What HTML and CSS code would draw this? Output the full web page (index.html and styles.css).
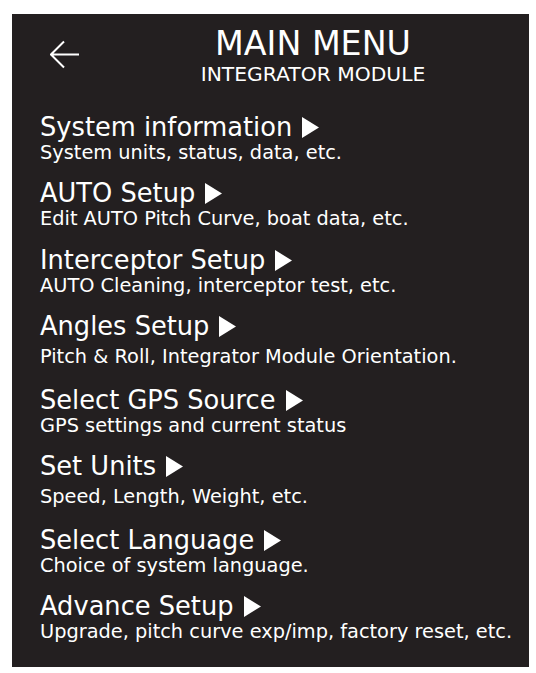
FILE: index.html
```html
<!DOCTYPE html>
<html lang="en">
<head>
<meta charset="utf-8">
<title>Main Menu</title>
<link rel="stylesheet" href="styles.css">
</head>
<body>
<div class="screen">
  <header class="header">
    <span class="back" aria-label="Back">
      <svg width="30" height="30" viewBox="0 0 30 30" aria-hidden="true">
        <path d="M1 14.5 H29 M14 1.5 L1 14.5 L14 27.5" fill="none" stroke="#fff" stroke-width="2" stroke-linecap="butt" stroke-linejoin="miter"/>
      </svg>
    </span>
    <div class="heading">
      <div class="heading-title">MAIN MENU</div>
      <div class="heading-sub">INTEGRATOR MODULE</div>
    </div>
  </header>
  <ul class="menu">
    <li class="item">
      <div class="item-title">System information<svg class="tri" width="17" height="21" viewBox="0 0 17 21"><polygon points="0,0 17,10.5 0,21" fill="#fff"/></svg></div>
      <div class="item-sub">System units, status, data, etc.</div>
    </li>
    <li class="item">
      <div class="item-title">AUTO Setup<svg class="tri" width="17" height="21" viewBox="0 0 17 21"><polygon points="0,0 17,10.5 0,21" fill="#fff"/></svg></div>
      <div class="item-sub">Edit AUTO Pitch Curve, boat data, etc.</div>
    </li>
    <li class="item">
      <div class="item-title">Interceptor Setup<svg class="tri" width="17" height="21" viewBox="0 0 17 21"><polygon points="0,0 17,10.5 0,21" fill="#fff"/></svg></div>
      <div class="item-sub">AUTO Cleaning, interceptor test, etc.</div>
    </li>
    <li class="item item--spaced">
      <div class="item-title">Angles Setup<svg class="tri" width="17" height="21" viewBox="0 0 17 21"><polygon points="0,0 17,10.5 0,21" fill="#fff"/></svg></div>
      <div class="item-sub">Pitch &amp; Roll, Integrator Module Orientation.</div>
    </li>
    <li class="item">
      <div class="item-title">Select GPS Source<svg class="tri" width="17" height="21" viewBox="0 0 17 21"><polygon points="0,0 17,10.5 0,21" fill="#fff"/></svg></div>
      <div class="item-sub">GPS settings and current status</div>
    </li>
    <li class="item item--spaced">
      <div class="item-title">Set Units<svg class="tri" width="17" height="21" viewBox="0 0 17 21"><polygon points="0,0 17,10.5 0,21" fill="#fff"/></svg></div>
      <div class="item-sub">Speed, Length, Weight, etc.</div>
    </li>
    <li class="item">
      <div class="item-title">Select Language<svg class="tri" width="17" height="21" viewBox="0 0 17 21"><polygon points="0,0 17,10.5 0,21" fill="#fff"/></svg></div>
      <div class="item-sub">Choice of system language.</div>
    </li>
    <li class="item">
      <div class="item-title">Advance Setup<svg class="tri" width="17" height="21" viewBox="0 0 17 21"><polygon points="0,0 17,10.5 0,21" fill="#fff"/></svg></div>
      <div class="item-sub">Upgrade, pitch curve exp/imp, factory reset, etc.</div>
    </li>
  </ul>
</div>
</body>
</html>
```
FILE: styles.css
```css
html, body {
  margin: 0;
  padding: 0;
  background: #ffffff;
}

body {
  font-family: "DejaVu Sans", Verdana, sans-serif;
  color: #ffffff;
}

.screen {
  box-sizing: border-box;
  width: 517px;
  height: 653px;
  margin: 14px 0 0 12px;
  padding-top: 11px;
  background: #231f20;
  overflow: hidden;
}

.header {
  display: flex;
  align-items: flex-start;
  padding-left: 38px;
}

.back {
  display: block;
  width: 30px;
  height: 30px;
  margin-top: 15px;
  flex: none;
}

.back svg {
  display: block;
}

.heading {
  flex: 1;
  margin-left: 17px;
  text-align: center;
}

.heading-title {
  font-size: 33.3px;
  line-height: 37px;
}

.heading-sub {
  font-size: 20.3px;
  line-height: 24px;
}

.menu {
  list-style: none;
  margin: 27px 0 0 0;
  padding: 0 0 0 28px;
  display: flex;
  flex-direction: column;
  gap: 14.3px;
}

.item {
  display: flex;
  flex-direction: column;
}

.item-title {
  font-size: 25.7px;
  line-height: 28px;
  white-space: nowrap;
}

.tri {
  margin-left: 10px;
  vertical-align: -2px;
}

.item-sub {
  font-size: 19.35px;
  line-height: 24px;
  white-space: nowrap;
}

.item--spaced .item-sub {
  margin-top: 5.5px;
  margin-bottom: 2px;
}
```
